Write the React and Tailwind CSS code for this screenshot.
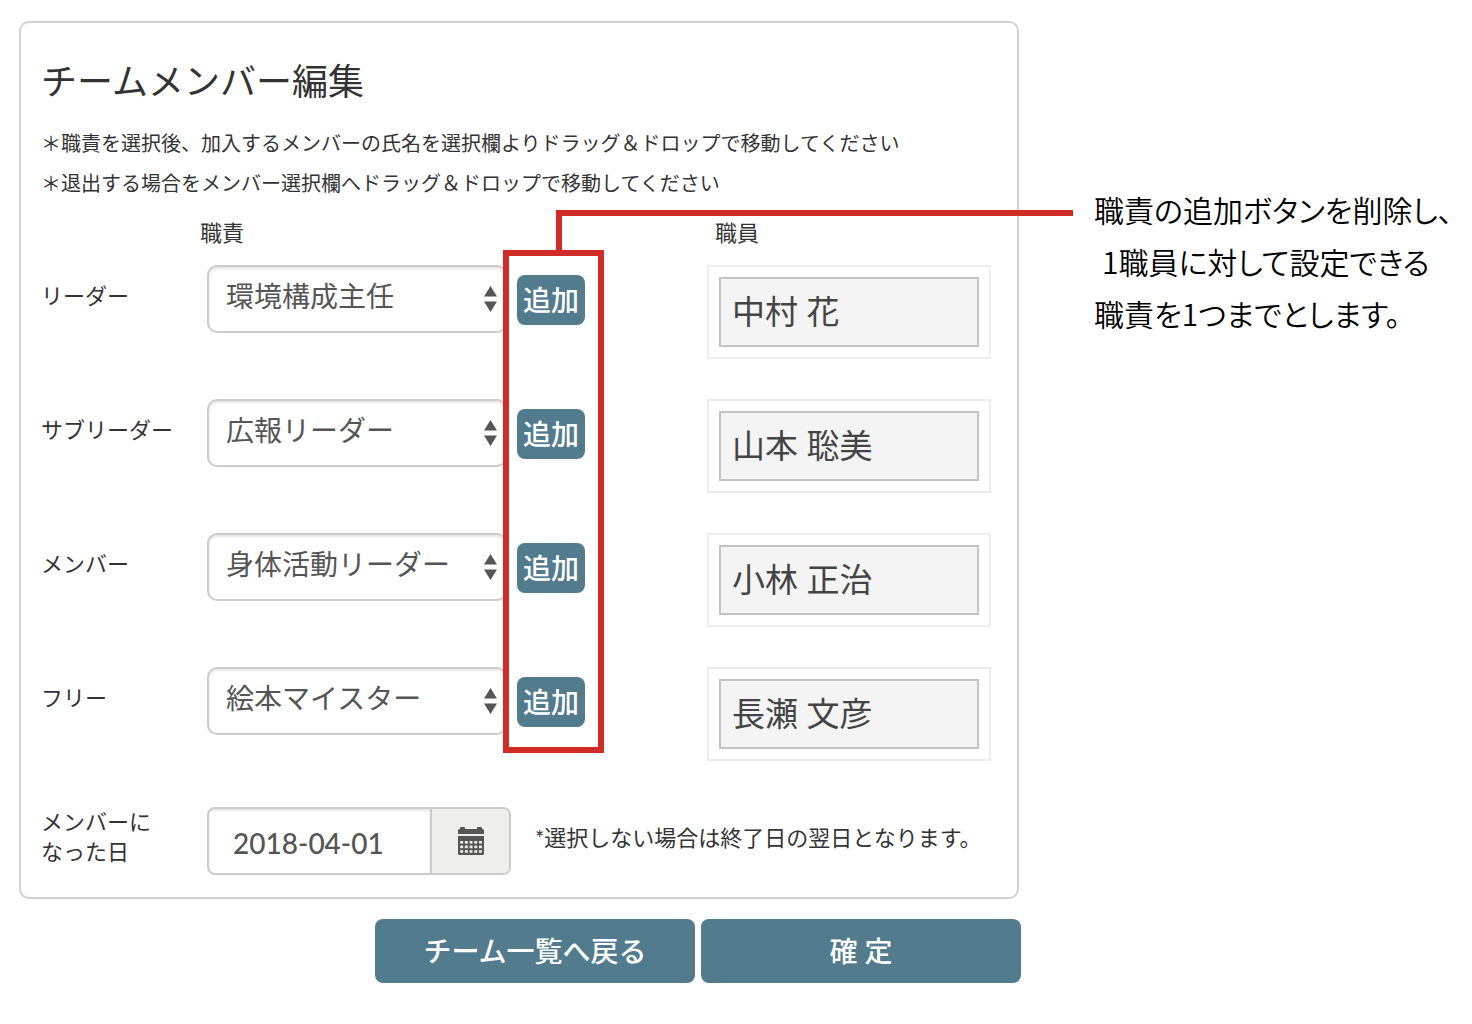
import React, { useState } from "react";

const DUTIES = [
  "環境構成主任",
  "広報リーダー",
  "身体活動リーダー",
  "絵本マイスター",
];

const MEMBERS = [
  { id: "leader", label: "リーダー", duty: "環境構成主任", staff: "中村 花" },
  { id: "subleader", label: "サブリーダー", duty: "広報リーダー", staff: "山本 聡美" },
  { id: "member", label: "メンバー", duty: "身体活動リーダー", staff: "小林 正治" },
  { id: "free", label: "フリー", duty: "絵本マイスター", staff: "長瀬 文彦" },
];

const SortIcon = () => (
  <svg
    className="pointer-events-none absolute right-[10px] top-[21px] h-[26px] w-[13px] text-[#555]"
    fill="currentColor"
    viewBox="0 0 13 26"
  >
    <path d="M6.5 0L13 10.5H0zM0 15.5h13L6.5 26z" />
  </svg>
);

const CalendarIcon = () => (
  <svg className="h-[28px] w-[26px]" viewBox="0 0 26 28">
    <path
      fill="#555"
      d="M0 7V3.500Q0 2 1.500 2H2V1Q2 0 3 0H6Q7 0 7 1V2H19V1Q19 0 20 0H23Q24 0 24 1V2H24.500Q26 2 26 3.500V7zM0 9H26V26.500Q26 28 24.500 28H1.500Q0 28 0 26.500z"
    />
    {[14, 18.6, 23.2].map((y) =>
      [2.2, 6.9, 11.6, 16.3, 21].map((x) => (
        <rect key={`${x}-${y}`} x={x} y={y} width="2.900" height="2.600" fill="#eeeeec" />
      ))
    )}
  </svg>
);

const MemberRow = ({ member }) => {
  const [duty, setDuty] = useState(member.duty);

  return (
    <div className="flex items-start">
      <label
        htmlFor={member.id}
        className="flex h-[60px] w-[166px] shrink-0 items-center text-[22px]"
      >
        {member.label}
      </label>
      <div className="relative min-w-0 flex-1">
        <select
          id={member.id}
          value={duty}
          onChange={(e) => setDuty(e.target.value)}
          className="block h-[68px] w-full appearance-none rounded-[10px] border-2 border-[#ccc] bg-white pb-[6px] pl-[17px] pr-8 text-[28px] text-[#555] shadow-[inset_0_2px_3px_rgba(0,0,0,0.1)] outline-none"
        >
          {DUTIES.map((d) => (
            <option key={d}>{d}</option>
          ))}
        </select>
        <SortIcon />
      </div>
      <button
        type="button"
        className="ml-[10px] mt-[10px] h-[50px] w-[68px] shrink-0 rounded-lg bg-[#527b8d] text-[28px] font-medium leading-[50px] text-white"
      >
        追加
      </button>
      <div className="ml-[122px] w-[284px] shrink-0 border-2 border-[#ececec] p-[10px]">
        <div className="h-[70px] border-2 border-[#c3c3c3] bg-[#f4f4f4] px-[11px] text-[33px] leading-[64px] text-[#444]">
          {member.staff}
        </div>
      </div>
    </div>
  );
};

const App = () => {
  const [date, setDate] = useState("2018-04-01");

  return (
    <div className="flex items-start bg-white pb-10 pl-[19px] pt-[21px] font-[Lato,'Noto_Sans_CJK_JP',sans-serif] text-[#333]">
      <main className="min-w-0 flex-1">
        <section className="rounded-[10px] border-2 border-[#d2d2d2] pb-[22px] pl-5 pr-[26px] pt-[38px]">
          <h1 className="mb-[22px] text-[36px] leading-[40px]">
            チームメンバー編集
          </h1>
          <p className="text-[20px] leading-[40px]">
            ＊職責を選択後、加入するメンバーの氏名を選択欄よりドラッグ＆ドロップで移動してください
          </p>
          <p className="text-[20px] leading-[40px]">
            ＊退出する場合をメンバー選択欄へドラッグ＆ドロップで移動してください
          </p>

          <div className="mb-4 mt-[14px] flex justify-between text-[22px] leading-[32px]">
            <span className="pl-[159px]">職責</span>
            <span className="w-[276px]">職員</span>
          </div>

          <div className="relative flex flex-col gap-10">
            {MEMBERS.map((member) => (
              <MemberRow key={member.id} member={member} />
            ))}

            {/* Callout around the add buttons */}
            <div className="pointer-events-none absolute -top-[15px] bottom-2 right-[387px] w-[101px] border-[6px] border-[#d02b26]" />
            <div className="pointer-events-none absolute -right-[82px] -top-[55px] h-10 w-[517px] border-l-[6px] border-t-[6px] border-[#d02b26]" />
          </div>

          <div className="mt-[46px] flex items-start text-[22px]">
            <label htmlFor="joined" className="w-[166px] shrink-0 leading-[30px]">
              メンバーに
              <br />
              なった日
            </label>
            <div className="flex h-[68px] w-[304px] shrink-0 overflow-hidden rounded-lg border-2 border-[#ccc]">
              <input
                id="joined"
                type="text"
                value={date}
                onChange={(e) => setDate(e.target.value)}
                className="min-w-0 flex-1 pl-6 pt-[3px] text-[28px] font-medium text-[#555] shadow-[inset_0_2px_3px_rgba(0,0,0,0.1)] outline-none"
              />
              <button
                type="button"
                aria-label="日付を選択"
                className="flex w-[79px] items-center justify-center border-l-2 border-[#ccc] bg-[#eeeeec]"
              >
                <CalendarIcon />
              </button>
            </div>
            <p className="ml-6 whitespace-nowrap leading-[62px]">
              *選択しない場合は終了日の翌日となります。
            </p>
          </div>
        </section>

        <div className="-mr-[2px] mt-5 flex justify-end gap-[6px] text-[28px] font-medium leading-[62px] text-white">
          <button type="button" className="h-16 w-[320px] rounded-lg bg-[#527b8d]">
            チーム一覧へ戻る
          </button>
          <button type="button" className="h-16 w-[320px] rounded-lg bg-[#527b8d]">
            確 定
          </button>
        </div>
      </main>

      <aside className="ml-[75px] mt-[162px] w-[378px] shrink-0 whitespace-nowrap font-['Noto_Sans_CJK_JP',sans-serif] text-[30px] font-[350] leading-[52px] text-black [font-feature-settings:'palt']">
        <p>職責の追加ボタンを削除し、</p>
        <p className="pl-2">1職員に対して設定できる</p>
        <p>職責を1つまでとします。</p>
      </aside>
    </div>
  );
};

export default App;
